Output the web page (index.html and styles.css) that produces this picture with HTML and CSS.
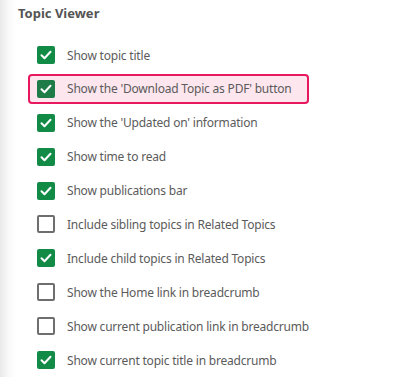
FILE: index.html
```html
<!DOCTYPE html>
<html lang="en">
  <head>
    <meta charset="UTF-8" />
    <meta name="viewport" content="width=device-width, initial-scale=1.0" />
    <title>Topic Viewer settings</title>
    <link rel="stylesheet" href="styles.css">
  </head>
  <body>
    <section class="panel">
      <h2 class="panel__title">Topic Viewer</h2>
      <ul class="options">
        <li class="option">
          <span class="check check--on"><svg viewBox="0 0 18 18"><path d="M4.5 9.2l3 3 6-6.4" /></svg></span>
          <span class="option__label">Show topic title</span>
        </li>
        <li class="option option--active">
          <span class="check check--on"><svg viewBox="0 0 18 18"><path d="M4.5 9.2l3 3 6-6.4" /></svg></span>
          <span class="option__label">Show the 'Download Topic as PDF' button</span>
        </li>
        <li class="option">
          <span class="check check--on"><svg viewBox="0 0 18 18"><path d="M4.5 9.2l3 3 6-6.4" /></svg></span>
          <span class="option__label">Show the 'Updated on' information</span>
        </li>
        <li class="option">
          <span class="check check--on"><svg viewBox="0 0 18 18"><path d="M4.5 9.2l3 3 6-6.4" /></svg></span>
          <span class="option__label">Show time to read</span>
        </li>
        <li class="option">
          <span class="check check--on"><svg viewBox="0 0 18 18"><path d="M4.5 9.2l3 3 6-6.4" /></svg></span>
          <span class="option__label">Show publications bar</span>
        </li>
        <li class="option">
          <span class="check"></span>
          <span class="option__label">Include sibling topics in Related Topics</span>
        </li>
        <li class="option">
          <span class="check check--on"><svg viewBox="0 0 18 18"><path d="M4.5 9.2l3 3 6-6.4" /></svg></span>
          <span class="option__label">Include child topics in Related Topics</span>
        </li>
        <li class="option">
          <span class="check"></span>
          <span class="option__label">Show the Home link in breadcrumb</span>
        </li>
        <li class="option">
          <span class="check"></span>
          <span class="option__label">Show current publication link in breadcrumb</span>
        </li>
        <li class="option">
          <span class="check check--on"><svg viewBox="0 0 18 18"><path d="M4.5 9.2l3 3 6-6.4" /></svg></span>
          <span class="option__label">Show current topic title in breadcrumb</span>
        </li>
      </ul>
    </section>
  </body>
</html>
```

FILE: styles.css
```css
* {
  margin: 0;
  padding: 0;
  box-sizing: border-box;
}

body {
  color: #5b5b5b;
  background: linear-gradient(to right, #e9e9e9 0, #f8f8f8 8px, #fff 16px);
  font-family: "Noto Sans", "Open Sans", sans-serif;
  height: 377px;
  overflow: hidden;
}

.panel {
  padding: 3px 0 0 18px;
}
.panel__title {
  font-size: 13px;
  font-weight: 700;
  line-height: 20px;
  color: #555;
}

.options {
  list-style: none;
  display: flex;
  flex-direction: column;
  gap: 3.9px;
  margin: 17px 0 0 10px;
}
.option {
  display: flex;
  align-items: center;
  gap: 12px;
  width: 281px;
  height: 30px;
  padding: 0 7px;
  border: 2px solid transparent;
  border-radius: 4px;
  font-size: 12px;
  letter-spacing: -0.2px;
  white-space: nowrap;
}
.option--active {
  background-color: #fde6ee;
  border-color: #e8185e;
}

.check {
  flex: none;
  width: 18px;
  height: 18px;
  border: 2px solid #6e6e6e;
  border-radius: 2px;
  display: flex;
}
.check--on {
  border: none;
  background-color: #128b47;
}
.option--active .check--on {
  background-color: #1f7b48;
}
.check svg {
  width: 18px;
  height: 18px;
  fill: none;
  stroke: #fff;
  stroke-width: 2;
  stroke-linecap: round;
  stroke-linejoin: round;
}
```
